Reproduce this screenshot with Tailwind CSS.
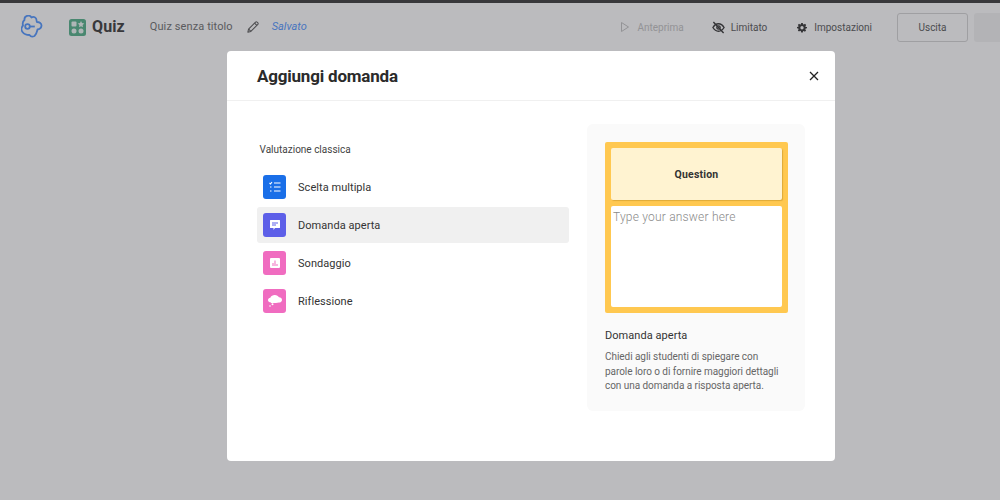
<!DOCTYPE html>
<html lang="it">

<head>
    <meta charset="UTF-8">
    <title>Quiz</title>
    <script src="https://cdn.jsdelivr.net/npm/@tailwindcss/browser@4"></script>
</head>

<body class="relative w-[1000px] h-[500px] overflow-hidden bg-white font-['Roboto',sans-serif]">
    <!-- Editor top bar -->
    <div class="h-[3px] bg-[#4a4a4a]"></div>
    <header class="flex items-center h-[48px] pl-[21px] text-[#666] text-[10px]">
        <svg class="w-[22px] h-[24px] text-[#5f9eff]" viewBox="0 0 22 24" fill="none" stroke="currentColor" stroke-width="1.800" stroke-linejoin="round">
            <path d="M3.500 5a3.800 3.800 0 0 1 7-2.500 3.200 3.200 0 0 1 5 2.500c0 1 0 1.500 .5 2 2.500 0 4.500 1.500 4.500 3.500 0 2-1.500 3.500-4 4-.5 2-1 5-3 6.500-2 1-4 .5-5-1-2.500 0-5.500-1-7-3-1.500-2-1-5 .5-6.500C1.500 8.500 2 6 3.500 5z" />
            <circle cx="6.500" cy="11.500" r="2.300" />
            <path d="M8.800 11.500h5" />
        </svg>
        <div class="flex items-center ml-[26px]">
            <svg class="w-[17px] h-[17px]" viewBox="0 0 17 17">
                <rect width="17" height="17" rx="2.500" fill="#62b894" />
                <rect x="2.500" y="2.500" width="5" height="5" rx="1" fill="#ffffff" fill-opacity=".9" />
                <path fill="#ffffff" fill-opacity=".9" d="M12 2l1 2.100 2.300.3-1.700 1.600.4 2.300-2-1.100-2 1.100.4-2.300-1.700-1.600 2.300-.3z" />
                <circle cx="5" cy="12" r="2.500" fill="#ffffff" fill-opacity=".9" />
                <circle cx="12" cy="12" r="2.500" fill="#ffffff" fill-opacity=".9" />
            </svg>
            <span class="ml-[6px] text-[16px] font-bold tracking-[0.1px] text-[#4a4a4a]">Quiz</span>
        </div>
        <span class="ml-[25px] text-[11px] tracking-[0.1px] text-[#7a7a7a]">Quiz senza titolo</span>
        <svg class="ml-[14px] w-[12px] h-[12px] text-[#666]" viewBox="0 0 14 14" fill="none" stroke="currentColor" stroke-width="1.200" stroke-linejoin="round">
            <path d="M1 13l.8-3.500L10 1.300a1.200 1.200 0 0 1 1.700 0l1 1a1.200 1.200 0 0 1 0 1.700L4.500 12.200z" />
            <path d="M8.800 2.500l2.700 2.700M2 9.500L4.500 12" />
        </svg>
        <span class="ml-[13px] text-[11px] italic text-[#5f9eff]">Salvato</span>

        <div class="flex items-center ml-auto">
            <svg class="w-[8px] h-[10px] text-[#c8c8c8]" viewBox="0 0 8 10" fill="none" stroke="currentColor"><path d="M.5 .5l7 4.500-7 4.500z" stroke-linejoin="round" /></svg>
            <span class="ml-[8px] text-[#c8c8c8]">Anteprima</span>
            <svg class="ml-[28px] w-[13px] h-[13px] text-[#444]" viewBox="0 0 14 14" fill="none" stroke="currentColor" stroke-width="1.500">
                <path d="M1 7c1.500-2.500 3.500-4 6-4s4.500 1.500 6 4c-1.500 2.500-3.500 4-6 4s-4.500-1.500-6-4z" />
                <circle cx="7" cy="7" r="1.800" />
                <path d="M1.500 1l11 12" />
            </svg>
            <span class="ml-[6px]">Limitato</span>
            <svg class="ml-[30px] w-[10px] h-[11px] text-[#444]" viewBox="0 0 24 24" fill="currentColor"><path fill-rule="evenodd" d="M10 1h4l.6 3.200 1.900.8 2.700-1.800 2.800 2.800-1.800 2.700.8 1.900L24 11v3l-3.200.6-.8 1.900 1.800 2.700-2.800 2.800-2.700-1.800-1.900.8L14 24h-4l-.6-3.200-1.900-.8-2.700 1.800L2 19l1.800-2.700-.8-1.900L0 14v-3l3-.6.8-1.900L2 5.800 4.800 3l2.700 1.800L9.400 4zM12 8.500a4 4 0 1 0 0 8 4 4 0 0 0 0-8z" /></svg>
            <span class="ml-[7px]">Impostazioni</span>
            <button class="ml-[25px] w-[71px] h-[29px] rounded-[3px] border border-[#d8d8d8]">Uscita</button>
            <div class="ml-[6px] w-[26px] h-[29px] rounded-l-[3px] bg-[#f4f4f4]"></div>
        </div>
    </header>

    <!-- Backdrop with add-question dialog -->
    <div class="absolute inset-0 pt-[51px] pl-[227px] bg-[#0a0c14]/[0.28]">
        <div class="w-[608px] h-[410px] rounded-[4px] bg-white text-[#2b2b2b]">
            <div class="flex items-center justify-between h-[50px] pl-[30px] pr-[16px] border-b border-[#f0f0f0]">
                <h2 class="pt-[2px] text-[17px] font-bold tracking-[-0.2px] text-[#2b2b2b]">Aggiungi domanda</h2>
                <svg class="w-[10px] h-[10px] text-[#222]" viewBox="0 0 10 10" fill="none" stroke="currentColor" stroke-width="1.300"><path d="M1 1l8 8M9 1l-8 8" /></svg>
            </div>

            <div class="flex pt-[23px] pl-[30px]">
                <div class="w-[312px] pt-[19px]">
                    <p class="pl-[2.500px] text-[10px] leading-[14px] text-[#444]">Valutazione classica</p>
                    <ul class="mt-[12px] flex flex-col gap-[2px] text-[11px] tracking-[0.05px] text-[#333]">
                        <li class="flex items-center h-[36px] pl-[6px] rounded-[3px]">
                            <span class="flex items-center justify-center w-[23px] h-[24px] rounded-[3px] bg-[#1a6fe8]">
                                <svg class="w-[12px] h-[12px]" viewBox="0 0 12 12" fill="none" stroke="#fff" stroke-width="1.100"><path d="M.5 2l1 1 1.500-2M5 2h6.500M5 6h6.500M5 10h6.500M1 6h1.500M1 10h1.500" /></svg>
                            </span>
                            <span class="ml-[12px] pt-[2px]">Scelta multipla</span>
                        </li>
                        <li class="flex items-center h-[36px] pl-[6px] rounded-[3px] bg-[#f0f0f0]">
                            <span class="flex items-center justify-center w-[23px] h-[24px] rounded-[3px] bg-[#5d5fe8]">
                                <svg class="w-[12px] h-[12px]" viewBox="0 0 12 12"><path fill="#fff" fill-rule="evenodd" d="M1.500 1h9A.5.5 0 0 1 11 1.500v7a.5.5 0 0 1-.5.5H6l-1.500 2V9h-3A.5.5 0 0 1 1 8.500v-7A.5.5 0 0 1 1.500 1zM3 3.500v1h6v-1zM3 5.500v1h4v-1z" /></svg>
                            </span>
                            <span class="ml-[12px] pt-[2px]">Domanda aperta</span>
                        </li>
                        <li class="flex items-center h-[36px] pl-[6px] rounded-[3px]">
                            <span class="flex items-center justify-center w-[23px] h-[24px] rounded-[3px] bg-[#f06cc0]">
                                <svg class="w-[10px] h-[10px]" viewBox="0 0 10 10"><path fill="#fff" fill-rule="evenodd" d="M1 0h8a1 1 0 0 1 1 1v8a1 1 0 0 1-1 1H1a1 1 0 0 1-1-1V1a1 1 0 0 1 1-1zM2.500 5v3h1V5zM4.500 2.500V8h1V2.500zM6.500 6v2h1V6z" /></svg>
                            </span>
                            <span class="ml-[12px] pt-[2px]">Sondaggio</span>
                        </li>
                        <li class="flex items-center h-[36px] pl-[6px] rounded-[3px]">
                            <span class="flex items-center justify-center w-[23px] h-[24px] rounded-[3px] bg-[#f06cc0]">
                                <svg class="w-[14px] h-[12px]" viewBox="0 0 14 12"><path fill="#fff" d="M3 7.500C1 7.500 0 6.300 0 5c0-1.200 1-2.200 2.300-2.300C3 1 4.800 0 6.800 0c2 0 3.500 1 4.200 2.300 1.700 0 3 1.200 3 2.600 0 1.500-1.300 2.600-3 2.600-1 .3-2 .5-3 .5H3z" /><circle cx="4.500" cy="9.300" r="1" fill="#fff" /><circle cx="2" cy="11" r=".8" fill="#fff" /></svg>
                            </span>
                            <span class="ml-[12px] pt-[2px]">Riflessione</span>
                        </li>
                    </ul>
                </div>

                <aside class="ml-[18px] w-[218px] h-[287px] pt-[18px] pl-[18px] pr-[17px] rounded-[6px] bg-[#fafafa]">
                    <div class="flex flex-col gap-[6px] h-[171px] p-[6px] rounded-[2px] bg-[#ffc850]">
                        <div class="flex items-center justify-center h-[52px] pt-[1px] rounded-[2px] bg-[#fff3d1] shadow-[1px_1px_1px_rgba(150,100,0,0.3)] text-[10.500px] font-bold tracking-[0.2px] text-[#333]">Question</div>
                        <div class="flex-1 px-[2px] pt-[3px] rounded-[2px] bg-white text-[12px] leading-[16px] tracking-[0.2px] text-[#8a8a8a] font-light">Type your answer here</div>
                    </div>
                    <h3 class="mt-[14px] pt-[1px] text-[11px] leading-[16px] tracking-[0.05px] text-[#333]">Domanda aperta</h3>
                    <p class="mt-[6px] text-[10px] leading-[14.700px] tracking-[-0.05px] text-[#666]">Chiedi agli studenti di spiegare con parole loro o di fornire maggiori dettagli con una domanda a risposta aperta.</p>
                </aside>
            </div>
        </div>
    </div>
</body>

</html>
